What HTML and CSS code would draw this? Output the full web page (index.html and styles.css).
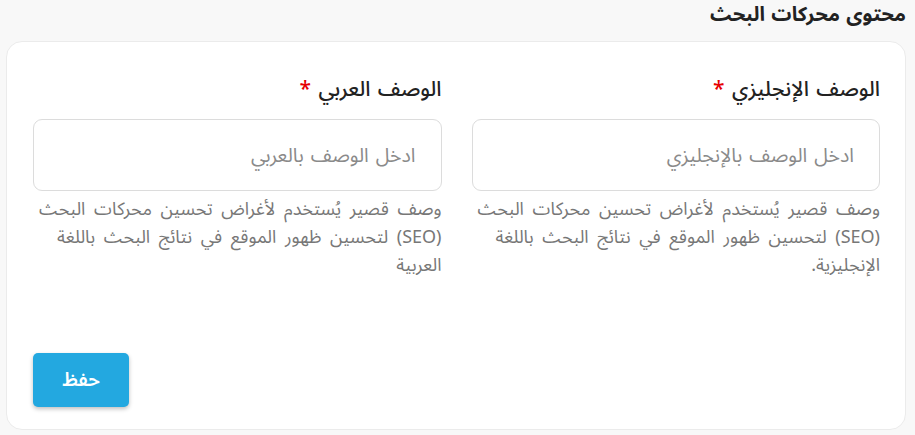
FILE: index.html
```html
<!DOCTYPE html>
<html lang="ar" dir="rtl">
<head><meta charset="utf-8"><title>محتوى محركات البحث</title><link rel="stylesheet" href="styles.css"></head>
<body>
<main class="page">
  <h2 class="section-title">محتوى محركات البحث</h2>
  <section class="card">
    <div class="fields">
      <div class="field">
        <label class="field-label">الوصف الإنجليزي <span class="req">*</span></label>
        <div class="input">ادخل الوصف بالإنجليزي</div>
        <p class="hint">وصف قصير يُستخدم لأغراض تحسين محركات البحث (SEO) لتحسين ظهور الموقع في نتائج البحث باللغة الإنجليزية.</p>
      </div>
      <div class="field">
        <label class="field-label">الوصف العربي <span class="req">*</span></label>
        <div class="input">ادخل الوصف بالعربي</div>
        <p class="hint">وصف قصير يُستخدم لأغراض تحسين محركات البحث (SEO) لتحسين ظهور الموقع في نتائج البحث باللغة العربية</p>
      </div>
    </div>
    <div class="actions">
      <button class="btn-save">حفظ</button>
    </div>
  </section>
</main>
</body></html>
```
FILE: styles.css
```css
*{box-sizing:border-box}
html,body{margin:0;background:#f8f8f8}
body{font-family:"Noto Sans Arabic","Noto Sans",sans-serif;color:#222}
.page{padding:2px 9px 0 6px}
.section-title{margin:0;font-size:20px;font-weight:700;line-height:26px;height:39px;color:#222;word-spacing:1px}
.card{background:#fff;border:1px solid #ebebeb;border-radius:16px;height:389px;padding:30px 25px 0 26px;display:flex;flex-direction:column}
.fields{display:grid;grid-template-columns:1fr 1fr;column-gap:30px}
.field{display:flex;flex-direction:column}
.field-label{font-size:21px;font-weight:500;line-height:34px;color:#222;margin-bottom:13px;word-spacing:2px}
.req{color:#e60000}
.input{height:72px;border:1px solid #dcdcdc;border-radius:9px;padding:0 25px;display:flex;align-items:center;font-size:19.5px;color:#8a8a8a;word-spacing:2px}
.hint{margin:4px 0 0;font-size:18px;line-height:28px;color:#777;word-spacing:4px}
.actions{margin-top:auto;padding-bottom:22px;display:flex;justify-content:flex-end}
.btn-save{width:96px;height:54px;border:0;border-radius:5px;background:#23a8e0;color:#fff;font-family:inherit;font-size:19px;font-weight:600;box-shadow:0 2px 4px rgba(0,0,0,.25)}
```
